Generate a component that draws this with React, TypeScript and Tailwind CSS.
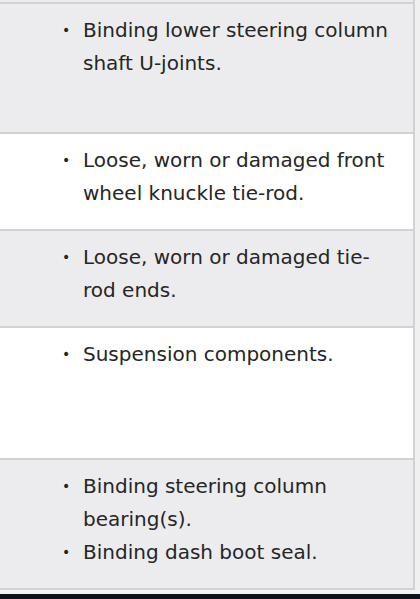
import React from "react";

const rows = [
  { h: "h-[130px]", bg: "bg-[#ececee]", items: ["Binding lower steering column shaft U-joints."] },
  { h: "h-[97px]", bg: "bg-white", items: ["Loose, worn or damaged front wheel knuckle tie-rod."] },
  { h: "h-[97px]", bg: "bg-[#ececee]", items: ["Loose, worn or damaged tie-rod ends."] },
  { h: "h-[132px]", bg: "bg-white", items: ["Suspension components."] },
  { h: "h-[130px]", bg: "bg-[#ececee]", items: ["Binding steering column bearing(s).", "Binding dash boot seal."] },
];

export default function App() {
  return (
    <div className="w-[420px] h-[599px] overflow-hidden bg-white font-['DejaVu_Sans',sans-serif] text-[20px] leading-[33px] text-[#262626]">
      <div className="flex">
        <div className="w-[413px] shrink-0">
          <div className="h-[2px] bg-[#ececee]" />
          <div className="h-[2px] bg-[#d2d2d4]" />
          {rows.map((row, i) => (
            <div key={i} className={`${row.h} ${row.bg} box-border border-b-2 border-[#d2d2d4] pt-[10px]`}>
              <ul className="pl-[62px] pr-[20px]">
                {row.items.map((t) => (
                  <li key={t} className="flex">
                    <span className="w-[21px] shrink-0 text-[14px]">•</span>
                    <span>{t}</span>
                  </li>
                ))}
              </ul>
            </div>
          ))}
        </div>
        <div className="w-[2px] shrink-0 h-[590px] bg-[#d2d2d4]" />
        <div className="flex-1 h-[590px] bg-[#f0f0f1]" />
      </div>
      <div className="h-[4px] bg-[#f4f4f5]" />
      <div className="h-[5px] bg-[#0b1219]" />
    </div>
  );
}
